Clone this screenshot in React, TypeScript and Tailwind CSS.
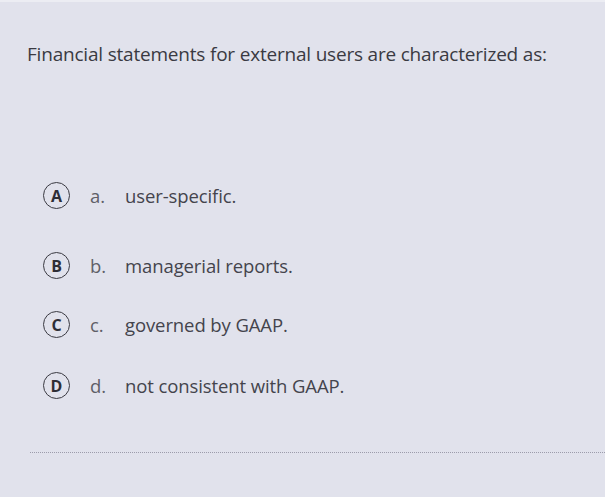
import React from "react";

type Choice = { key: string; label: string; text: string; gap: string };

const choices: Choice[] = [
  { key: "A", label: "a.", text: "user-specific.", gap: "mt-[0px]" },
  { key: "B", label: "b.", text: "managerial reports.", gap: "mt-[44px]" },
  { key: "C", label: "c.", text: "governed by GAAP.", gap: "mt-[33px]" },
  { key: "D", label: "d.", text: "not consistent with GAAP.", gap: "mt-[35px]" },
];

const ChoiceRow = ({ choice }: { choice: Choice }) => (
  <div className={`flex items-center h-[26px] ${choice.gap}`}>
    <div className="w-[27px] h-[27px] shrink-0 rounded-full border-[1.5px] border-[#3a3a42] flex items-center justify-center text-[16px] font-bold text-[#2e2e36] leading-none">
      {choice.key}
    </div>
    <span className="ml-[20px] w-[35px] text-[#5f5f68]">{choice.label}</span>
    <span className="text-[#44444c] tracking-[-0.1px]">{choice.text}</span>
  </div>
);

export default function App() {
  return (
    <div
      className="w-[605px] h-[497px] bg-[#e1e2ec] border-t-2 border-[#ecedf3] overflow-hidden text-[18.5px]"
      style={{ fontFamily: '"Open Sans", "Liberation Sans", sans-serif' }}
    >
      <p className="pl-[27px] pt-[38px] text-[19px] tracking-[-0.2px] text-[#3a3a42]">
        Financial statements for external users are characterized as:
      </p>

      <div className="pl-[43px] mt-[114px] flex flex-col">
        {choices.map((c) => (
          <ChoiceRow key={c.key} choice={c} />
        ))}
      </div>

      <div className="ml-[30px] mt-[53px] border-t border-dotted border-[#9c9cab]" />
    </div>
  );
}
